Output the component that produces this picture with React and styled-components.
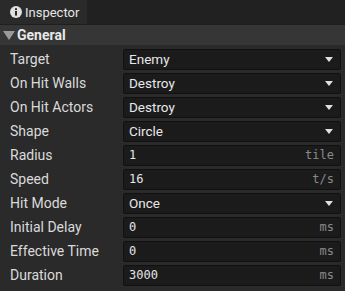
import React from 'react';
import styled, { createGlobalStyle } from 'styled-components';

const Global = createGlobalStyle`
    html, body {
        margin: 0;
        padding: 0;
        background: #1f1f1f;
    }
    body {
        font-family: Roboto, "Liberation Sans", sans-serif;
        font-size: 13px;
        color: #dcdcdc;
    }
`;

const Panel = styled.div`
    width: 345px;
    height: 291px;
    display: flex;
    flex-direction: column;
    background: #2a2a2a;
    overflow: hidden;
`;

const TabBar = styled.div`
    display: flex;
    height: 24px;
    background: #212121;
`;

const Tab = styled.div`
    display: flex;
    align-items: center;
    gap: 3px;
    padding: 0 8px 0 10px;
    background: #2a2a2a;
    color: #e6e6e6;
    font-size: 13px;
`;

const InfoIcon = () => (
    <svg width="12" height="12" viewBox="0 0 12 12">
        <circle cx="6" cy="6" r="6" fill="#e0e0e0" />
        <circle cx="6" cy="3.2" r="1.1" fill="#2a2a2a" />
        <rect x="5" y="5" width="2" height="4.6" fill="#2a2a2a" />
    </svg>
);

const SectionHeader = styled.div`
    display: flex;
    align-items: center;
    gap: 2px;
    height: 20px;
    padding-left: 3px;
    background: #363636;
    border-top: 1px solid #1f1f1f;
    color: #e8e8e8;
    font-weight: 700;
    font-size: 14px;
`;

const Caret = styled.span`
    width: 0;
    height: 0;
    border-left: 6px solid transparent;
    border-right: 6px solid transparent;
    border-top: 9px solid #9a9a9a;
`;

const Rows = styled.div`
    display: flex;
    flex-direction: column;
    padding-top: 2px;
`;

const Row = styled.div`
    display: grid;
    grid-template-columns: 123px 1fr;
    align-items: center;
    height: 24px;
    padding-right: 4px;
`;

const Label = styled.div`
    padding-left: 10px;
    font-size: 14px;
    color: #dadada;
`;

const Field = styled.div`
    display: flex;
    align-items: center;
    justify-content: space-between;
    height: 19px;
    padding: 0 6px 0 5px;
    background: #1b1b1b;
    border: 1px solid #111;
    border-radius: 2px;
    color: #e8e8e8;
    font-size: 13.5px;
`;

const MonoValue = styled.span`
    font-family: "DejaVu Sans Mono", "Liberation Mono", monospace;
    font-size: 12px;
    color: #e6e6e6;
`;

const Unit = styled.span`
    font-family: "DejaVu Sans Mono", "Liberation Mono", monospace;
    font-size: 12px;
    color: #8a8a8a;
`;

const SmallCaret = styled.span`
    margin-right: 1px;
    width: 0;
    height: 0;
    border-left: 4px solid transparent;
    border-right: 4px solid transparent;
    border-top: 5px solid #e0e0e0;
`;

const rows = [
    { label: 'Target', select: 'Enemy' },
    { label: 'On Hit Walls', select: 'Destroy' },
    { label: 'On Hit Actors', select: 'Destroy' },
    { label: 'Shape', select: 'Circle' },
    { label: 'Radius', value: '1', unit: 'tile' },
    { label: 'Speed', value: '16', unit: 't/s' },
    { label: 'Hit Mode', select: 'Once' },
    { label: 'Initial Delay', value: '0', unit: 'ms' },
    { label: 'Effective Time', value: '0', unit: 'ms' },
    { label: 'Duration', value: '3000', unit: 'ms' },
];

export default function App() {
    return (
        <>
            <Global />
            <Panel>
                <TabBar>
                    <Tab>
                        <InfoIcon />
                        Inspector
                    </Tab>
                </TabBar>
                <SectionHeader>
                    <Caret />
                    General
                </SectionHeader>
                <Rows>
                    {rows.map(r => (
                        <Row key={r.label}>
                            <Label>{r.label}</Label>
                            <Field>
                                {r.select ? (
                                    <>
                                        <span>{r.select}</span>
                                        <SmallCaret />
                                    </>
                                ) : (
                                    <>
                                        <MonoValue>{r.value}</MonoValue>
                                        <Unit>{r.unit}</Unit>
                                    </>
                                )}
                            </Field>
                        </Row>
                    ))}
                </Rows>
            </Panel>
        </>
    );
}
